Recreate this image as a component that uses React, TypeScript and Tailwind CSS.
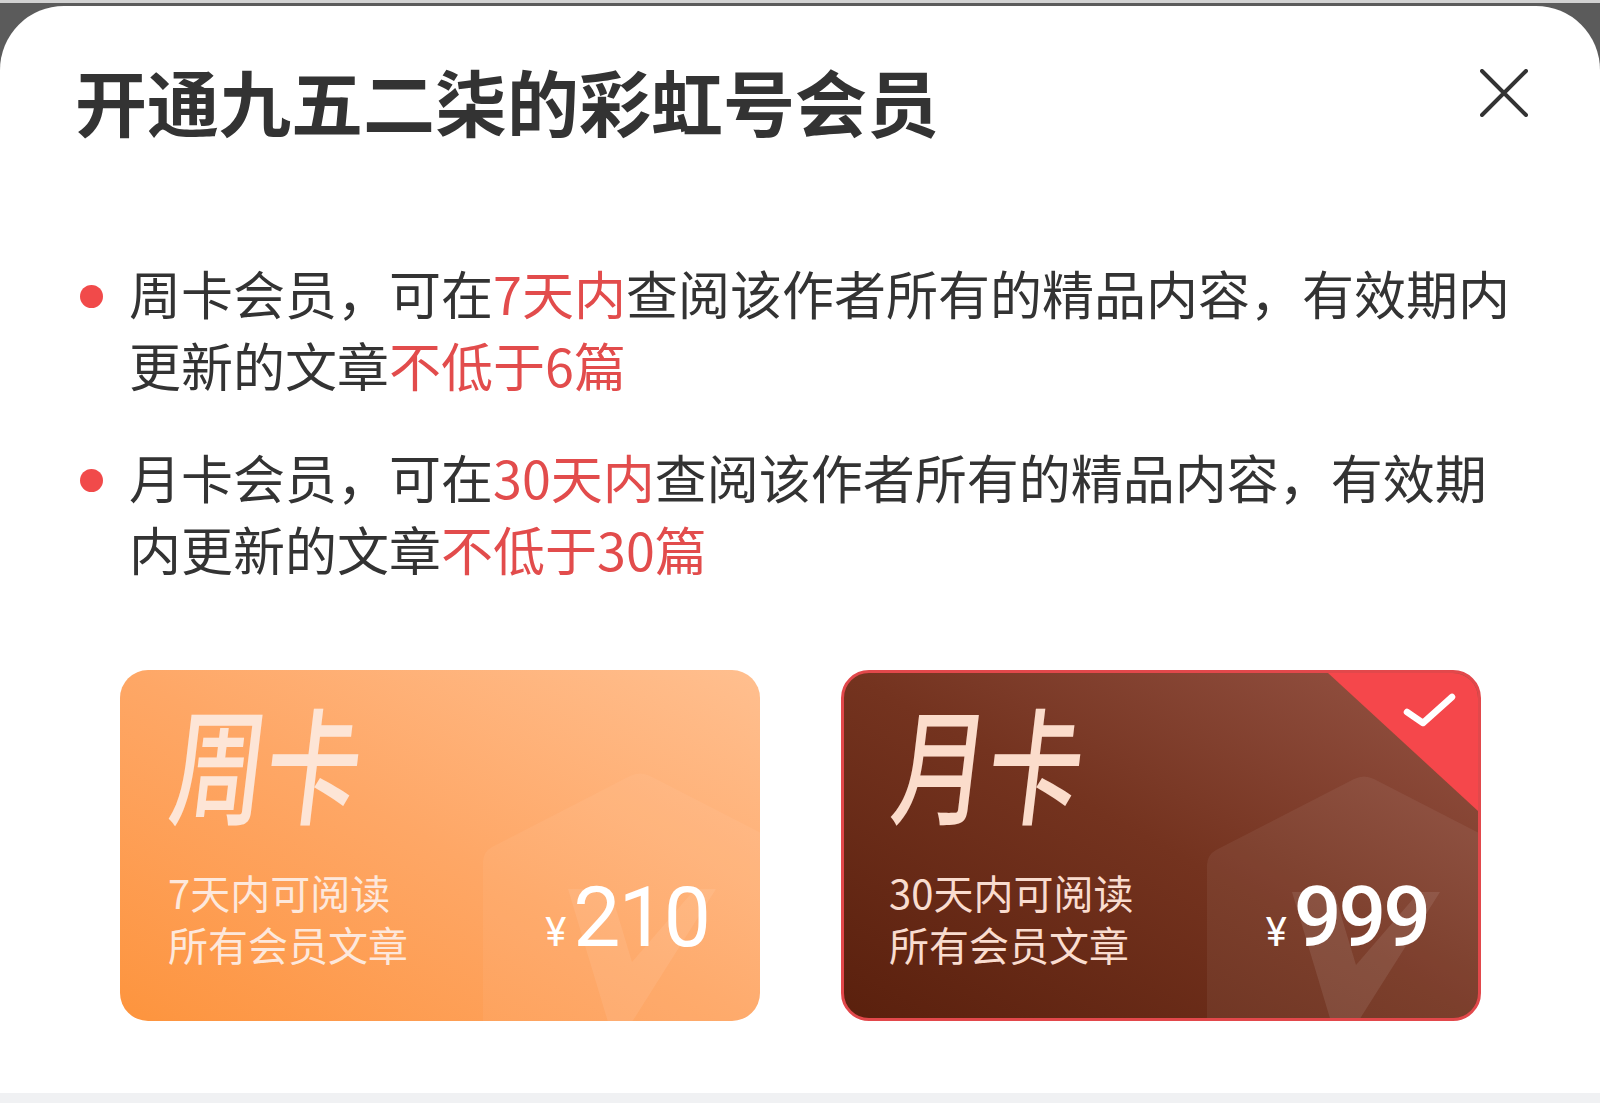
import { ReactNode } from "react";

const cjk = { fontFamily: '"Noto Sans CJK SC", "Noto Sans", sans-serif' };
const num = { fontFamily: 'Roboto, "Noto Sans", sans-serif' };

type Plan = {
    name: string,
    line1: string,
    line2: string,
    price: string,
    selected: boolean,
}

const plans: Plan[] = [
    { name: "周卡", line1: "7天内可阅读", line2: "所有会员文章", price: "210", selected: false },
    { name: "月卡", line1: "30天内可阅读", line2: "所有会员文章", price: "999", selected: true },
];

const Red = ({ children }: { children: ReactNode }) => (
    <span className="text-[#e24c4c]">{children}</span>
);

const Bullet = ({ children }: { children: ReactNode }) => (
    <div className="flex">
        <span className="mt-[28px] h-[23px] w-[23px] shrink-0 rounded-full bg-[#f14a4a]" />
        <p className="ml-[26px] whitespace-nowrap text-[52px] leading-[71.5px] text-[#333333]">{children}</p>
    </div>
);

const Pattern = ({ dark }: { dark: boolean }) => (
    <svg className="pointer-events-none absolute left-0 top-0" width="640" height="351" viewBox="0 0 640 351">
        <path
            d="M363 360 L363 192 Q363 182 372 177 L510 106 Q520 101 530 106 L668 177 Q677 182 677 192 L677 360 Z"
            fill="#ffffff"
            fillOpacity={dark ? "0.06" : "0.05"}
        />
        <path d="M448 219 L490 219 L512 292 L575 219 L596 219 L512 352 L488 352 Z" fill="#ffffff" fillOpacity={dark ? "0.09" : "0.08"} />
    </svg>
);

const PlanCard = ({ plan }: { plan: Plan }) => {
    const sel = plan.selected;
    return (
        <div
            className={
                sel
                    ? "relative h-[351px] w-[640px] overflow-hidden rounded-[28px] border-[3px] border-[#e2484b] bg-gradient-to-tr from-[#5a200d] via-[#74331f] to-[#965445]"
                    : "relative h-[351px] w-[640px] overflow-hidden rounded-[28px] bg-gradient-to-tr from-[#fd943d] via-[#fea766] to-[#ffbf8f]"
            }
        >
            <Pattern dark={sel} />
            {sel && (
                <>
                    <div className="absolute right-0 top-0 h-[138px] w-[150px] bg-[#f5474b] [clip-path:polygon(0_0,100%_0,100%_100%)]" />
                    <svg className="absolute left-[555px] top-[17px]" width="62" height="42" viewBox="0 0 62 42">
                        <path d="M8 22 L24 33 L53 7" fill="none" stroke="#ffffff" strokeWidth="6.5" strokeLinecap="round" strokeLinejoin="round" />
                    </svg>
                </>
            )}
            <div className={sel ? "relative flex h-full flex-col pl-[45px] pr-[50px]" : "relative flex h-full flex-col pl-[48px] pr-[51px]"}>
                <div
                    style={cjk}
                    className={
                        sel
                            ? "ml-[6px] mt-[24px] origin-left -skew-x-[9deg] scale-x-[0.75] text-[126px] leading-none font-medium text-[#fbdccb]"
                            : "ml-[5px] mt-[27px] origin-left -skew-x-[9deg] scale-x-[0.75] text-[126px] leading-none font-medium text-[#fde5d6]"
                    }
                >
                    {plan.name}
                </div>
                <div className={sel ? "mt-[43px] flex justify-between" : "mt-[43px] flex justify-between"}>
                    <div style={cjk} className={sel ? "text-[40px] leading-[52px] text-[#f9dccf]" : "text-[40px] leading-[52px] text-[#fde8dc]"}>
                        <div>{plan.line1}</div>
                        <div>{plan.line2}</div>
                    </div>
                    <div style={num} className="mt-[10px] flex items-baseline text-white">
                        <span className="mr-[7px] text-[40px] leading-none">¥</span>
                        <span className={sel ? "text-[84px] leading-none font-medium tracking-[-3px]" : "text-[84px] leading-none tracking-[-2px]"}>{plan.price}</span>
                    </div>
                </div>
            </div>
        </div>
    );
};

const App = () => {
    return (
        <div className="h-[1103px] w-[1600px] overflow-hidden bg-[#5b5b5b]" style={cjk}>
            <div className="h-[3px] bg-[#d2d2d2]" />
            <div className="mt-[3px] flex h-[1087px] flex-col rounded-t-[64px] bg-white">
                <div className="flex items-start justify-between pl-[75px] pr-[72px] pt-[54px]">
                    <h1 className="text-[72px] leading-[80px] font-bold text-[#333333]">开通九五二柒的彩虹号会员</h1>
                    <button className="mt-[9px] p-0">
                        <svg width="48" height="48" viewBox="0 0 48 48">
                            <path d="M2 2 L46 46 M46 2 L2 46" stroke="#333333" strokeWidth="4" strokeLinecap="round" />
                        </svg>
                    </button>
                </div>

                <div className="mt-[117px] flex flex-col gap-[41px] pl-[80px]">
                    <Bullet>
                        周卡会员，可在<Red>7天内</Red>查阅该作者所有的精品内容，有效期内
                        <br />
                        更新的文章<Red>不低于6篇</Red>
                    </Bullet>
                    <Bullet>
                        月卡会员，可在<Red>30天内</Red>查阅该作者所有的精品内容，有效期
                        <br />
                        内更新的文章<Red>不低于30篇</Red>
                    </Bullet>
                </div>

                <div className="mt-[86px] flex gap-[81px] pl-[120px]">
                    {plans.map((p) => (
                        <PlanCard key={p.name} plan={p} />
                    ))}
                </div>
            </div>
            <div className="h-[10px] bg-[#f0f1f3]" />
        </div>
    );
};

export default App;
